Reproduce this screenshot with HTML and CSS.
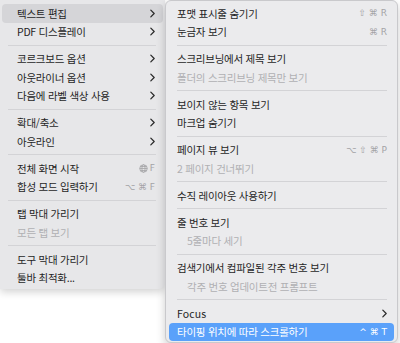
FILE: index.html
```html
<!DOCTYPE html>
<html lang="ko">
<head>
<meta charset="utf-8">
<link rel="stylesheet" href="styles.css">
</head>
<body>
<div class="desk">
  <div class="menu menu-left">
    <div class="item active"><span class="label">텍스트 편집</span><svg class="chev" viewBox="0 0 6 10"><path d="M1 1 L5 5 L1 9"/></svg></div>
    <div class="item"><span class="label">PDF 디스플레이</span><svg class="chev" viewBox="0 0 6 10"><path d="M1 1 L5 5 L1 9"/></svg></div>
    <div class="sep"></div>
    <div class="item"><span class="label">코르크보드 옵션</span><svg class="chev" viewBox="0 0 6 10"><path d="M1 1 L5 5 L1 9"/></svg></div>
    <div class="item"><span class="label">아웃라이너 옵션</span><svg class="chev" viewBox="0 0 6 10"><path d="M1 1 L5 5 L1 9"/></svg></div>
    <div class="item"><span class="label">다음에 라벨 색상 사용</span><svg class="chev" viewBox="0 0 6 10"><path d="M1 1 L5 5 L1 9"/></svg></div>
    <div class="sep"></div>
    <div class="item"><span class="label">확대/축소</span><svg class="chev" viewBox="0 0 6 10"><path d="M1 1 L5 5 L1 9"/></svg></div>
    <div class="item"><span class="label">아웃라인</span><svg class="chev" viewBox="0 0 6 10"><path d="M1 1 L5 5 L1 9"/></svg></div>
    <div class="sep"></div>
    <div class="item"><span class="label">전체 화면 시작</span><span class="key"><svg class="globe" viewBox="0 0 10 10"><circle cx="5" cy="5" r="4.2"/><ellipse cx="5" cy="5" rx="1.8" ry="4.2"/><path d="M0.8 5 H9.2 M1.6 2.8 H8.4 M1.6 7.2 H8.4"/></svg> F</span></div>
    <div class="item"><span class="label">합성 모드 입력하기</span><span class="key">⌥ ⌘ F</span></div>
    <div class="sep"></div>
    <div class="item"><span class="label">탭 막대 가리기</span></div>
    <div class="item disabled"><span class="label">모든 탭 보기</span></div>
    <div class="sep"></div>
    <div class="item"><span class="label">도구 막대 가리기</span></div>
    <div class="item"><span class="label">툴바 최적화...</span></div>
  </div>
  <div class="menu menu-right">
    <div class="item"><span class="label">포맷 표시줄 숨기기</span><span class="key">⇧ ⌘ R</span></div>
    <div class="item"><span class="label">눈금자 보기</span><span class="key">⌘ R</span></div>
    <div class="sep"></div>
    <div class="item"><span class="label">스크리브닝에서 제목 보기</span></div>
    <div class="item disabled"><span class="label">폴더의 스크리브닝 제목만 보기</span></div>
    <div class="sep"></div>
    <div class="item"><span class="label">보이지 않는 항목 보기</span></div>
    <div class="item"><span class="label">마크업 숨기기</span></div>
    <div class="sep"></div>
    <div class="item"><span class="label">페이지 뷰 보기</span><span class="key">⌥ ⇧ ⌘ P</span></div>
    <div class="item disabled"><span class="label">2 페이지 건너뛰기</span></div>
    <div class="sep"></div>
    <div class="item"><span class="label">수직 레이아웃 사용하기</span></div>
    <div class="sep"></div>
    <div class="item"><span class="label">줄 번호 보기</span></div>
    <div class="item disabled indent"><span class="label">5줄마다 세기</span></div>
    <div class="sep"></div>
    <div class="item"><span class="label">검색기에서 컴파일된 각주 번호 보기</span></div>
    <div class="item disabled indent"><span class="label">각주 번호 업데이트전 프롬프트</span></div>
    <div class="sep"></div>
    <div class="item"><span class="label latin">Focus</span><svg class="chev" viewBox="0 0 6 10"><path d="M1 1 L5 5 L1 9"/></svg></div>
    <div class="item selected"><span class="label">타이핑 위치에 따라 스크롤하기</span><span class="key">^ ⌘ T</span></div>
  </div>
</div>
</body>
</html>
```
FILE: styles.css
```css
html, body {
  margin: 0;
  padding: 0;
  background: #ffffff;
}
body {
  width: 400px;
  height: 343px;
  overflow: hidden;
  font-family: "Noto Sans CJK KR", "Noto Sans", sans-serif;
  font-size: 10.5px;
  color: #1f1f1f;
}
.desk {
  display: flex;
  align-items: flex-start;
}
.menu {
  display: flex;
  flex-direction: column;
  box-sizing: border-box;
}
.menu-left {
  width: 165px;
  background: #e7e7e9;
  padding: 4px 2px 2px 2px;
  box-shadow: 0 3px 8px rgba(0, 0, 0, 0.18);
  border-bottom-right-radius: 6px;
}
.menu-right {
  width: 233px;
  background: #ebebed;
  border: 1px solid #c9c9cc;
  border-radius: 6px;
  padding: 3px 3px 1px 3px;
  box-shadow: 0 4px 10px rgba(0, 0, 0, 0.2);
}
.item {
  height: 18.5px;
  display: flex;
  align-items: center;
  justify-content: space-between;
  border-radius: 4px;
  letter-spacing: -0.25px;
  white-space: nowrap;
}
.menu-left .item {
  padding: 0 8px 0 15px;
}
.menu-right .item {
  padding: 0 7px 0 8px;
}
.menu-right .item.indent {
  padding-left: 18px;
}
.item.active {
  background: #d5d5d8;
}
.item.selected {
  background: #5aa1fa;
  color: #ffffff;
}
.item.disabled {
  color: #b0b0b3;
}
.label.latin {
  letter-spacing: 0.1px;
}
.key {
  font-family: "DejaVu Sans", sans-serif;
  font-size: 9px;
  color: #a3a3a6;
  letter-spacing: 0;
  display: flex;
  align-items: center;
  gap: 2px;
}
.item.selected .key {
  color: #ffffff;
}
.chev {
  width: 5px;
  height: 9px;
  fill: none;
  stroke: #2a2a2a;
  stroke-width: 1.5;
  stroke-linecap: round;
  stroke-linejoin: round;
}
.globe {
  width: 9px;
  height: 9px;
  fill: none;
  stroke: #a3a3a6;
  stroke-width: 0.9;
}
.sep {
  height: 1px;
  background: #d3d3d6;
  margin: 3.75px 7px 3.75px 6px;
}
.menu-right .sep {
  margin: 3.75px 7px 3.75px 8px;
}
```
